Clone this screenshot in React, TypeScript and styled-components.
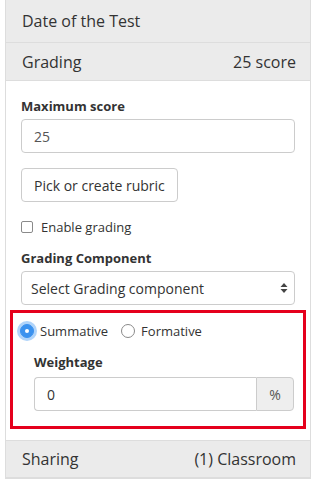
import React from "react";
import styled, { createGlobalStyle } from "styled-components";

const Global = createGlobalStyle`
  html, body { margin: 0; padding: 0; background: #fff; }
  body { font-family: "Open Sans", "Liberation Sans", sans-serif; color: #333; }
  * { box-sizing: border-box; }
`;

const Panel = styled.div`
  margin-left: 5px;
  width: 306px;
  border-left: 1px solid #ddd;
  border-right: 1px solid #ddd;
  border-bottom: 1px solid #ddd;
`;

const Heading = styled.div<{ $h: number; $top?: boolean }>`
  height: ${(p) => p.$h}px;
  background: #ebebeb;
  border-bottom: 1px solid #ddd;
  border-top: ${(p) => (p.$top ? "1px solid #ddd" : "none")};
  display: flex;
  align-items: center;
  justify-content: space-between;
  padding: 0 14px 0 16px;
  font-size: 16px;
  color: #333;
`;

const Body = styled.div`
  padding: 16px 15px 11px 15px;
  display: flex;
  flex-direction: column;
`;

const Label = styled.div<{ $mt?: number }>`
  font-size: 13px;
  font-weight: 700;
  line-height: 18px;
  margin-top: ${(p) => p.$mt ?? 0}px;
  margin-bottom: 4px;
  color: #333;
`;

const TextBox = styled.div`
  height: 34px;
  flex: none;
  border: 1px solid #ccc;
  border-radius: 4px;
  display: flex;
  align-items: center;
  padding: 0 12px;
  font-size: 14px;
  color: #555;
  background: #fff;
`;

const Button = styled.div`
  align-self: flex-start;
  margin-top: 15px;
  height: 34px;
  border: 1px solid #ccc;
  border-radius: 4px;
  display: flex;
  align-items: center;
  padding: 0 12px;
  font-size: 14px;
  color: #333;
  background: #fff;
`;

const CheckRow = styled.label`
  margin-top: 15px;
  height: 20px;
  display: flex;
  align-items: center;
  font-size: 13px;
  color: #333;
`;

const CheckBox = styled.span`
  width: 12px;
  height: 12px;
  border: 1px solid #8a8a8a;
  border-radius: 2px;
  margin-right: 8px;
  background: #fff;
`;

const Select = styled.div`
  height: 34px;
  border: 1px solid #ccc;
  border-radius: 4px;
  display: flex;
  align-items: center;
  justify-content: space-between;
  padding: 0 6px 0 9px;
  font-size: 14px;
  color: #333;
  background: #fff;
`;

const Highlight = styled.div`
  margin: 5px -11px 0 -11px;
  border: 3px solid #e5001c;
  padding: 8px 9px 15px 4px;
  display: flex;
  flex-direction: column;
`;

const RadioRow = styled.div`
  height: 20px;
  display: flex;
  align-items: center;
  font-size: 13px;
  color: #333;
`;

const RadioItem = styled.label`
  display: flex;
  align-items: center;
  margin-right: 13px;
`;

const Radio = styled.span<{ $on?: boolean }>`
  width: 14px;
  height: 14px;
  border-radius: 50%;
  margin: 0 6px 0 ${(p) => (p.$on ? 3 : 0)}px;
  display: flex;
  align-items: center;
  justify-content: center;
  background: ${(p) => (p.$on ? "#3b92ef" : "#fff")};
  border: 1px solid ${(p) => (p.$on ? "#3b92ef" : "#8a8a8a")};
  box-shadow: ${(p) => (p.$on ? "0 0 0 3px rgba(80,160,245,0.45)" : "none")};
  &::after {
    content: "";
    display: ${(p) => (p.$on ? "block" : "none")};
    width: 4px;
    height: 4px;
    border-radius: 50%;
    background: #fff;
  }
`;

const Indented = styled.div`
  padding-left: 17px;
  display: flex;
  flex-direction: column;
`;

const Group = styled.div`
  display: flex;
  height: 34px;
  margin-top: 2px;
`;

const GroupInput = styled(TextBox)`
  flex: 1;
  border-radius: 4px 0 0 4px;
  border-right: none;
  color: #333;
`;

const Addon = styled.div`
  width: 38px;
  border: 1px solid #ccc;
  border-radius: 0 4px 4px 0;
  background: #eee;
  display: flex;
  align-items: center;
  justify-content: center;
  font-size: 14px;
  color: #555;
`;

const Arrows = () => (
  <svg width="8" height="12" viewBox="0 0 8 12">
    <path d="M4 1 L7.5 5 L0.5 5 Z" fill="#444" />
    <path d="M4 11 L7.5 7 L0.5 7 Z" fill="#444" />
  </svg>
);

export default function App() {
  return (
    <>
      <Global />
      <Panel>
        <Heading $h={43}>
          <span>Date of the Test</span>
        </Heading>
        <Heading $h={38}>
          <span>Grading</span>
          <span>25 score</span>
        </Heading>
        <Body>
          <Label>Maximum score</Label>
          <TextBox>25</TextBox>
          <Button>Pick or create rubric</Button>
          <CheckRow>
            <CheckBox />
            Enable grading
          </CheckRow>
          <Label $mt={12}>Grading Component</Label>
          <Select>
            <span>Select Grading component</span>
            <Arrows />
          </Select>
          <Highlight>
            <RadioRow>
              <RadioItem>
                <Radio $on />
                Summative
              </RadioItem>
              <RadioItem>
                <Radio />
                Formative
              </RadioItem>
            </RadioRow>
            <Indented>
              <Label $mt={12}>Weightage</Label>
              <Group>
                <GroupInput>0</GroupInput>
                <Addon>%</Addon>
              </Group>
            </Indented>
          </Highlight>
        </Body>
        <Heading $h={38} $top>
          <span>Sharing</span>
          <span>(1) Classroom</span>
        </Heading>
      </Panel>
    </>
  );
}
